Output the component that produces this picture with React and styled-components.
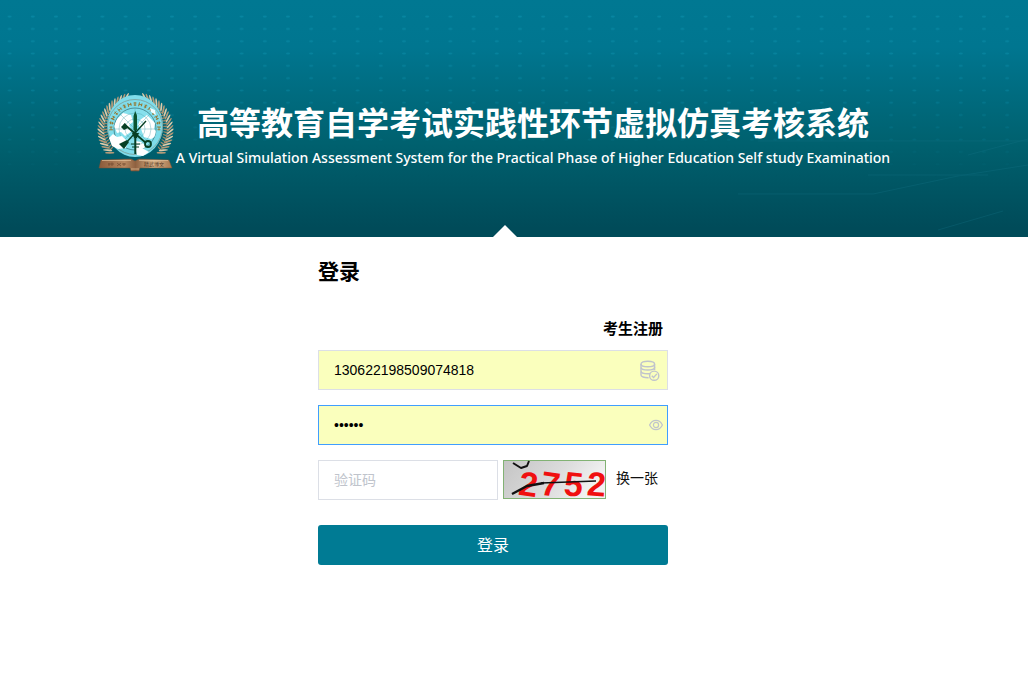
import React, { useState } from "react";
import styled, { createGlobalStyle } from "styled-components";

const LEAF_ANGLES = Array.from({ length: 22 }, (_, i) => 138 + i * 5.6);
const RING_MARKS = Array.from({ length: 15 }, (_, i) => -91 + i * 13);

const App = () => {
  const [account, setAccount] = useState("130622198509074818");
  const [password, setPassword] = useState("123456");
  const [code, setCode] = useState("");
  const [showPassword, setShowPassword] = useState(false);

  return (
    <>
      <GlobalStyle />
      <Header>
        <HeaderPattern />
        <Brand>
          <Emblem />
          <BrandText>
            <Title>高等教育自学考试实践性环节虚拟仿真考核系统</Title>
            <Subtitle>
              A Virtual Simulation Assessment System for the Practical Phase of
              Higher Education Self study Examination
            </Subtitle>
          </BrandText>
        </Brand>
        <Pointer />
      </Header>
      <Main>
        <Form onSubmit={(e) => e.preventDefault()}>
          <FormTitle>登录</FormTitle>
          <RegisterRow>
            <RegisterLink href="#register">考生注册</RegisterLink>
          </RegisterRow>
          <Field $filled>
            <Input
              aria-label="账号"
              value={account}
              onChange={(e) => setAccount(e.target.value)}
            />
            <IconSlot>
              <CoinsIcon />
            </IconSlot>
          </Field>
          <Field $filled $active>
            <Input
              aria-label="密码"
              type={showPassword ? "text" : "password"}
              value={password}
              onChange={(e) => setPassword(e.target.value)}
            />
            <EyeButton
              type="button"
              aria-label="显示密码"
              onClick={() => setShowPassword(!showPassword)}
            >
              <EyeIcon />
            </EyeButton>
          </Field>
          <CodeRow>
            <CodeField>
              <Input
                aria-label="验证码"
                placeholder="验证码"
                value={code}
                onChange={(e) => setCode(e.target.value)}
              />
            </CodeField>
            <Captcha />
            <RefreshLink href="#refresh">换一张</RefreshLink>
          </CodeRow>
          <SubmitButton type="submit">登录</SubmitButton>
        </Form>
      </Main>
    </>
  );
};

export default App;

const HeaderPattern = () => (
  <PatternSvg aria-hidden="true">
    <defs>
      <pattern
        id="dots"
        x="-2"
        y="10.5"
        width="23.2"
        height="12.3"
        patternUnits="userSpaceOnUse"
      >
        <ellipse cx="11.6" cy="6.2" rx="2" ry="1" fill="#0a8ba6" />
      </pattern>
      <linearGradient id="fade" x1="0" y1="0" x2="0" y2="1">
        <stop offset="0" stopColor="#fff" stopOpacity="0.9" />
        <stop offset="0.4" stopColor="#fff" stopOpacity="0.45" />
        <stop offset="0.75" stopColor="#fff" stopOpacity="0" />
      </linearGradient>
      <mask id="dotMask">
        <rect width="100%" height="100%" fill="url(#fade)" />
      </mask>
    </defs>
    <rect y="10" width="100%" height="200" fill="url(#dots)" mask="url(#dotMask)" />
    <svg x="100%" overflow="visible">
      <g fill="none" stroke="#17768a" strokeWidth="1" opacity="0.28">
        <path d="M-270 141H0" />
        <path d="M-290 194H-155L-70 176L0 165" />
        <path d="M-90 230L-25 211" />
        <path d="M-160 175H-40" />
        <path d="M-60 155L0 139" />
      </g>
    </svg>
  </PatternSvg>
);

const Leaves = () => (
  <g>
    {LEAF_ANGLES.map((angle, i) => (
      <g key={angle} transform={`rotate(${angle} 38 38)`}>
        <ellipse
          cx="72"
          cy="38"
          rx="4.6"
          ry="0.9"
          fill={i % 2 ? "#dccbab" : "#b59a78"}
          transform="rotate(42 72 38)"
        />
        <ellipse
          cx="68"
          cy="40"
          rx="3"
          ry="0.7"
          fill="#a08a6a"
          transform="rotate(-8 68 40)"
        />
      </g>
    ))}
  </g>
);

const Emblem = () => (
  <EmblemSvg viewBox="0 0 78 80" role="img" aria-label="徽标">
    <defs>
      <linearGradient id="bronze" x1="0" y1="0" x2="1" y2="0">
        <stop offset="0" stopColor="#8a5a3a" />
        <stop offset="0.35" stopColor="#b98a62" />
        <stop offset="0.5" stopColor="#8f6140" />
        <stop offset="0.75" stopColor="#d9b48a" />
        <stop offset="1" stopColor="#a87750" />
      </linearGradient>
      <clipPath id="globe">
        <circle cx="38" cy="37" r="21" />
      </clipPath>
    </defs>
    <Leaves />
    <g transform="translate(77 0) scale(-1 1)">
      <Leaves />
    </g>
    <ellipse cx="38" cy="34" rx="28" ry="31" fill="#7fdcea" />
    <circle cx="38" cy="35" r="27.5" fill="none" stroke="#7d9c94" strokeWidth="0.8" />
    {RING_MARKS.map((angle, i) => (
      <g key={angle} transform={`rotate(${angle} 38 36)`}>
        <path
          d={
            i % 2
              ? "M36.5 11H39.5M38 10V14M36.7 13H39.3"
              : "M36.6 10V14M39.3 10.5V13.5M36.5 12H39.8"
          }
          stroke="#96762f"
          strokeWidth="0.9"
          fill="none"
        />
      </g>
    ))}
    <circle cx="38" cy="37" r="21" fill="#86e0ed" stroke="#43868c" strokeWidth="0.9" />
    <g clipPath="url(#globe)">
      <path
        d="M20 27L26 21L34 23L36 30L32 33L35 39L28 44L24 40L20 41L17 34Z"
        fill="#fff"
      />
      <path
        d="M43 28L50 23L58 31L57 37L62 42L54 47L47 45L44 37L41 33Z"
        fill="#fff"
      />
      <path d="M38 49L44 50L53 57L46 61L39 58Z" fill="#fff" />
      <g fill="none" stroke="#4fa4af" strokeWidth="0.4">
        <circle cx="38" cy="37" r="16" />
        <circle cx="38" cy="37" r="10" />
        <path d="M38 14V60M15 37H61M22 21L54 53M54 21L22 53" />
      </g>
    </g>
    <path
      d="M12 46L16 42L20 45L25 44L30 49L29 56L21 57L15 54Z"
      fill="#fff"
    />
    <path d="M38 56L45 56L52 60L46 64L40 63Z" fill="#fff" />
    <path d="M53 16L58 18L59 23L54 20Z" fill="#f4feff" />
    <g stroke="#063f24" fill="none">
      <path d="M38.3 22V62" strokeWidth="2" />
      <path d="M49 29L28 52" strokeWidth="1.4" />
      <path d="M27 32L49 51" strokeWidth="1.8" />
      <circle cx="51" cy="52" r="3" strokeWidth="1.8" />
      <path d="M34 52H43M35 55H42" strokeWidth="1.2" />
    </g>
    <path d="M24 35L28 31L31 36L27 38Z" fill="#063f24" />
    <path d="M30 48L32 50L27 57L22 52Z" fill="#063f24" />
    <path d="M36.5 24L38.3 19L40 24V38H36.5Z" fill="#0b5430" />
    <path d="M35 41H42L40 46H37Z" fill="#063f24" />
    <path
      d="M4 68L34 67L38 69L42 67L72 68L75 76L43 76L42 79H34L33 76L2 76Z"
      fill="url(#bronze)"
      stroke="#7a5134"
      strokeWidth="0.5"
    />
    <path d="M34 77H42M5 68.5H34M42 68.5H71" stroke="#e5c39c" strokeWidth="0.7" />
    <path
      d="M12 71V74M15 70.5V74M11 72H17M20 71L24 74M24 71L20 74M27 71V74M25 72H29"
      stroke="#70482f"
      strokeWidth="0.7"
    />
    <EmblemText x="47" y="74">
      精武博文
    </EmblemText>
  </EmblemSvg>
);

const CoinsIcon = () => (
  <svg width="20" height="22" viewBox="0 0 20 22" fill="none" stroke="#c0c4cc" strokeWidth="1.4">
    <ellipse cx="7.8" cy="4" rx="6.8" ry="2.8" />
    <path d="M1 4V7.2C1 8.8 4 10 7.8 10S14.6 8.8 14.6 7.2V4" />
    <path d="M1 7.5V11C1 12.6 4 13.8 7.8 13.8C8.8 13.8 9.6 13.7 10.2 13.5M14.6 7V10" />
    <path d="M1 11.5V15C1 16.6 4 17.8 8.6 17.7" />
    <circle cx="14.2" cy="15.7" r="4.6" />
    <path d="M11.8 15.7L13.6 17.5L16.9 13.9" />
  </svg>
);

const EyeIcon = () => (
  <svg width="14" height="12" viewBox="0 0 14 12" fill="none" stroke="#c0c4cc" strokeWidth="1.2">
    <path d="M0.6 6C2 3 4.2 1.4 7 1.4S12 3 13.4 6C12 9 9.8 10.6 7 10.6S2 9 0.6 6Z" />
    <circle cx="7" cy="6" r="2.6" />
  </svg>
);

const Captcha = () => (
  <CaptchaSvg viewBox="0 0 103 39" role="img" aria-label="验证码图片">
    <defs>
      <linearGradient id="paper" x1="0" y1="0" x2="1" y2="0.3">
        <stop offset="0" stopColor="#c4c4c4" />
        <stop offset="0.6" stopColor="#dcdcdc" />
        <stop offset="1" stopColor="#f2f2f2" />
      </linearGradient>
    </defs>
    <rect x="0.5" y="0.5" width="102" height="38" fill="url(#paper)" stroke="#82b274" />
    <CaptchaDigit x="16" y="36" transform="rotate(8 26 25)">2</CaptchaDigit>
    <CaptchaDigit x="38" y="36" transform="rotate(8 48 25)">7</CaptchaDigit>
    <CaptchaDigit x="61" y="36" transform="rotate(6 71 25)">5</CaptchaDigit>
    <CaptchaDigit x="84" y="36" transform="rotate(4 94 25)">2</CaptchaDigit>
    <g fill="none" stroke="#111" strokeLinejoin="round">
      <path d="M10 3L18 8L24 6L26 1" strokeWidth="2" />
      <path d="M9 34L24 26L41 23" strokeWidth="2.4" />
      <path d="M38 23L93 21" strokeWidth="1.5" />
    </g>
  </CaptchaSvg>
);

const GlobalStyle = createGlobalStyle`
  * {
    box-sizing: border-box;
  }

  body {
    margin: 0;
    background: #fff;
    color: #000;
    font-family: "Liberation Sans", "Noto Sans CJK SC", sans-serif;
    font-size: 14px;
  }
`;

const Header = styled.header`
  position: relative;
  display: flex;
  justify-content: center;
  min-height: 237px;
  padding: 92px 40px 64px 0;
  background: linear-gradient(#007892 0%, #007690 20%, #00616f 60%, #004b59 96%);
`;

const PatternSvg = styled.svg`
  position: absolute;
  inset: 0;
  width: 100%;
  height: 100%;
`;

const Brand = styled.div`
  position: relative;
  display: flex;
  align-items: flex-start;
`;

const EmblemSvg = styled.svg`
  flex: none;
  width: 78px;
  height: 80px;
`;

const EmblemText = styled.text`
  fill: #573824;
  font: 5px "Noto Sans CJK SC", sans-serif;
`;

const BrandText = styled.div`
  display: flex;
  flex-direction: column;
  align-items: center;
  min-width: 716px;
  padding-top: 6px;
  color: #fff;
  white-space: nowrap;
`;

const Title = styled.h1`
  margin: 0;
  font: bold 32px/46px "Noto Sans CJK SC", sans-serif;
`;

const Subtitle = styled.p`
  margin: 0;
  font: 500 14px/28px "Noto Sans", sans-serif;
`;

/* White notch on the bottom edge of the header */
const Pointer = styled.span`
  position: absolute;
  bottom: 0;
  left: calc(50% - 21px);
  border: 12px solid transparent;
  border-top-width: 0;
  border-bottom-color: #fff;
`;

const Main = styled.main`
  display: flex;
  justify-content: center;
  padding: 17px 42px 40px 0;
`;

const Form = styled.form`
  display: flex;
  flex-direction: column;
  width: 350px;
`;

const FormTitle = styled.h2`
  margin: 0;
  font: bold 21px/32px "Noto Sans CJK SC", sans-serif;
`;

const RegisterRow = styled.div`
  display: flex;
  justify-content: flex-end;
  padding: 30px 5px 10px;
`;

const RegisterLink = styled.a`
  color: #000;
  font: bold 15px/24px "Noto Sans CJK SC", sans-serif;
  text-decoration: none;
`;

const Field = styled.div`
  display: flex;
  align-items: center;
  height: 40px;
  margin-bottom: 15px;
  border: 1px solid ${({ $active }) => ($active ? "#409eff" : "#dcdfe6")};
  background: ${({ $filled }) => ($filled ? "#faffbd" : "#fff")};
`;

const CodeField = styled(Field)`
  width: 180px;
  margin: 0 5px 0 0;
`;

const Input = styled.input`
  flex: 1;
  min-width: 0;
  height: 100%;
  padding: 0 15px;
  border: 0;
  outline: 0;
  background: transparent;
  color: #000;
  font: 14px "Liberation Sans", "Noto Sans CJK SC", sans-serif;

  &::placeholder {
    color: #c0c4cc;
  }
`;

const IconSlot = styled.span`
  display: flex;
  padding: 2px 7px 0 0;
`;

const EyeButton = styled.button`
  display: flex;
  padding: 0 4px 0 0;
  border: 0;
  background: none;
  cursor: pointer;
`;

const CodeRow = styled.div`
  display: flex;
  align-items: flex-start;
  margin-bottom: 25px;
`;

const CaptchaSvg = styled.svg`
  flex: none;
  width: 103px;
  height: 39px;
  overflow: visible;
`;

const CaptchaDigit = styled.text`
  fill: #f01010;
  font: bold 34px/1 "Liberation Sans", sans-serif;
`;

const RefreshLink = styled.a`
  margin-left: 10px;
  color: #111;
  font: 14px/34px "Noto Sans CJK SC", sans-serif;
  text-decoration: none;
`;

const SubmitButton = styled.button`
  height: 40px;
  padding: 0 0 2px;
  border: 0;
  border-radius: 3px;
  background: #007b94;
  color: #fff;
  font: 16px "Noto Sans CJK SC", sans-serif;
  cursor: pointer;
`;
